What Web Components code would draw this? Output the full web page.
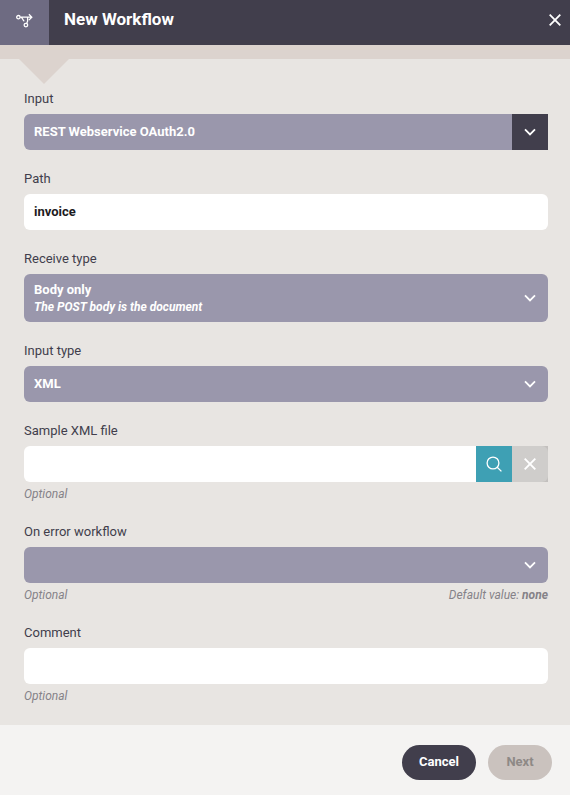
<!DOCTYPE html>
<html lang="en">
<head>
<meta charset="utf-8">
<meta name="viewport" content="width=device-width, initial-scale=1">
<title>New Workflow</title>
<style>
  :root {
    --dark: #413e4c;
    --tile: #6e6b82;
    --control: #9a97ac;
    --body: #e8e5e2;
    --strip: #dcd3ce;
    --foot: #f4f3f2;
    --teal: #3ea0b4;
    --muted: #858288;
  }
  body { margin: 0; font-family: Roboto, "Liberation Sans", sans-serif; font-size: 13px; color: var(--dark); background: var(--foot); }
</style>
</head>
<body>
<workflow-dialog>
  <dialog-header slot="header">New Workflow</dialog-header>
  <select-field label="Input" value="REST Webservice OAuth2.0" split></select-field>
  <text-field label="Path" value="invoice"></text-field>
  <select-field label="Receive type" value="Body only" note="The POST body is the document"></select-field>
  <select-field label="Input type" value="XML"></select-field>
  <file-field label="Sample XML file"><field-hint slot="hint">Optional</field-hint></file-field>
  <select-field label="On error workflow" value=""><field-hint slot="hint">Optional<span slot="end">Default value: <b>none</b></span></field-hint></select-field>
  <text-field label="Comment" value=""><field-hint slot="hint">Optional</field-hint></text-field>
  <pill-button slot="footer" label="Cancel"></pill-button>
  <pill-button slot="footer" label="Next" disabled></pill-button>
</workflow-dialog>
<script>
const fieldStyles = `
  :host { display: block; }
  * { box-sizing: border-box; }
  label { display: block; line-height: 20px; margin-bottom: 5px; }
  input, select { width: 100%; min-width: 0; height: 36px; margin: 0; border: 0; border-radius: 6px; padding: 0 10px 2px; font: bold 13px Roboto, "Liberation Sans", sans-serif; }
  input { background: #fff; color: #1d1b22; }
  input:focus-visible, select:focus-visible, button:focus-visible { outline: 2px solid var(--teal); }
`;

class BaseElement extends HTMLElement {
  connectedCallback() {
    if (this.shadowRoot) return;
    this.attachShadow({ mode: 'open' }).innerHTML = this.render();
  }
  text(name) { return this.getAttribute(name) || ''; }
}

customElements.define('workflow-dialog', class extends BaseElement {
  render() {
    return `<style>
      :host { display: flex; flex-direction: column; min-height: 100vh; }
      .strip { height: 14px; background: var(--strip); position: relative; }
      .strip::after { content: ""; position: absolute; left: 19px; top: 14px; width: 50px; height: 25px; background: var(--strip); clip-path: polygon(0 0, 100% 0, 50% 100%); }
      main { flex: 1; display: flex; flex-direction: column; gap: 19px; padding: 30px 22px 20px 24px; background: var(--body); }
      footer { display: flex; justify-content: flex-end; gap: 12px; padding: 20px 18px 15px; background: var(--foot); }
    </style>
    <slot name="header"></slot>
    <div class="strip"></div>
    <main><slot></slot></main>
    <footer><slot name="footer"></slot></footer>`;
  }
});

customElements.define('dialog-header', class extends BaseElement {
  render() {
    return `<style>
      :host { display: block; }
      header { display: flex; height: 45px; background: var(--dark); color: #fff; }
      .tile { width: 49px; background: var(--tile); display: grid; place-items: center; padding-bottom: 4px; box-sizing: border-box; }
      h1 { flex: 1; margin: 0; padding-left: 15px; font-size: 17px; line-height: 39px; font-weight: bold; }
      button { width: 31px; border: 0; padding: 0 0 5px; background: none; color: inherit; display: grid; place-items: center; cursor: pointer; }
      svg { display: block; fill: none; stroke: currentColor; }
    </style>
    <header>
      <div class="tile"><svg width="17" height="15" viewBox="0 0 17 15" stroke-width="1.3" aria-hidden="true">
        <circle cx="2.4" cy="4.2" r="1.7"/><path d="M4.1 4.2H15.6M12.9 1.3 15.8 4.2l-2.9 2.9M4.6 4.2C6.8 4.2 6.6 7.6 8.3 8.2M11.6 4.4V8.2L10.6 10.4"/><circle cx="9.9" cy="12.1" r="1.8"/>
      </svg></div>
      <h1><slot></slot></h1>
      <button type="button" aria-label="Close"><svg width="12" height="12" viewBox="0 0 12 12" stroke-width="1.8"><path d="M.7.7l10.6 10.6M11.3.7.7 11.3"/></svg></button>
    </header>`;
  }
});

customElements.define('field-hint', class extends BaseElement {
  render() {
    return `<style>
      :host { display: flex; justify-content: space-between; margin-top: 3px; font-size: 12px; line-height: 18px; font-style: italic; color: var(--muted); }
    </style><span><slot></slot></span><slot name="end"></slot>`;
  }
});

customElements.define('text-field', class extends BaseElement {
  render() {
    return `<style>${fieldStyles}
      input { display: block; }
    </style>
    <label for="control">${this.text('label')}</label>
    <input id="control" type="text" value="${this.text('value')}">
    <slot name="hint"></slot>`;
  }
});

customElements.define('select-field', class extends BaseElement {
  render() {
    const note = this.text('note');
    return `<style>${fieldStyles}
      .control { display: grid; grid-template-columns: 1fr 36px; }
      .control > * { grid-row: 1; }
      select { grid-column: 1 / 3; appearance: none; background: var(--control); color: #fff; padding-right: 40px; }
      .arrow { grid-column: 2; display: grid; place-items: center; pointer-events: none; color: #fff; }
      .arrow svg { display: block; fill: none; stroke: currentColor; }
      :host([split]) .arrow { background: var(--dark); }
      :host([split]) select { border-radius: 6px 0 0 6px; }
      :host([note]) select { height: 48px; padding-bottom: 17px; }
      .note { grid-column: 1; align-self: end; padding: 0 10px 6px; line-height: 17px; font-size: 12px; font-weight: bold; font-style: italic; color: #fff; pointer-events: none; }
    </style>
    <label for="control">${this.text('label')}</label>
    <div class="control">
      <select id="control"${note ? ' aria-describedby="note"' : ''}><option>${this.text('value')}</option></select>
      ${note ? `<span class="note" id="note">${note}</span>` : ''}
      <span class="arrow"><svg width="12" height="8" viewBox="0 0 12 8" stroke-width="1.8" aria-hidden="true"><path d="M1 1.4l5 5 5-5"/></svg></span>
    </div>
    <slot name="hint"></slot>`;
  }
});

customElements.define('file-field', class extends BaseElement {
  render() {
    return `<style>${fieldStyles}
      .control { display: flex; }
      input { flex: 1; border-radius: 6px 0 0 6px; }
      button { width: 36px; height: 36px; border: 0; padding: 0; display: grid; place-items: center; color: #fff; background: var(--teal); }
      .end { background: #c3c0be; }
      .clear { background: #cfcdcb; border-radius: 0 6px 6px 0; }
      svg { display: block; fill: none; stroke: currentColor; }
    </style>
    <label for="control">${this.text('label')}</label>
    <div class="control">
      <input id="control" type="text">
      <button type="button" aria-label="Browse"><svg width="16" height="16" viewBox="0 0 16 16" stroke-width="1.3"><circle cx="7" cy="7" r="5.9"/><path d="M11.2 11.2l4.2 4.2"/></svg></button>
      <div class="end"><button type="button" class="clear" aria-label="Clear"><svg width="12" height="12" viewBox="0 0 12 12" stroke-width="1.9"><path d="M.7.7l10.6 10.6M11.3.7.7 11.3"/></svg></button></div>
    </div>
    <slot name="hint"></slot>`;
  }
});

customElements.define('pill-button', class extends BaseElement {
  render() {
    return `<style>
      :host { display: block; }
      button { min-width: 74px; height: 35px; border: 0; border-radius: 18px; padding: 0 16px 2px; font: bold 13px Roboto, "Liberation Sans", sans-serif; background: var(--dark); color: #fff; }
      button:disabled { min-width: 64px; background: #cac2be; color: #8e8986; }
    </style><button type="button"${this.hasAttribute('disabled') ? ' disabled' : ''}>${this.text('label')}</button>`;
  }
});
</script>
</body>
</html>
